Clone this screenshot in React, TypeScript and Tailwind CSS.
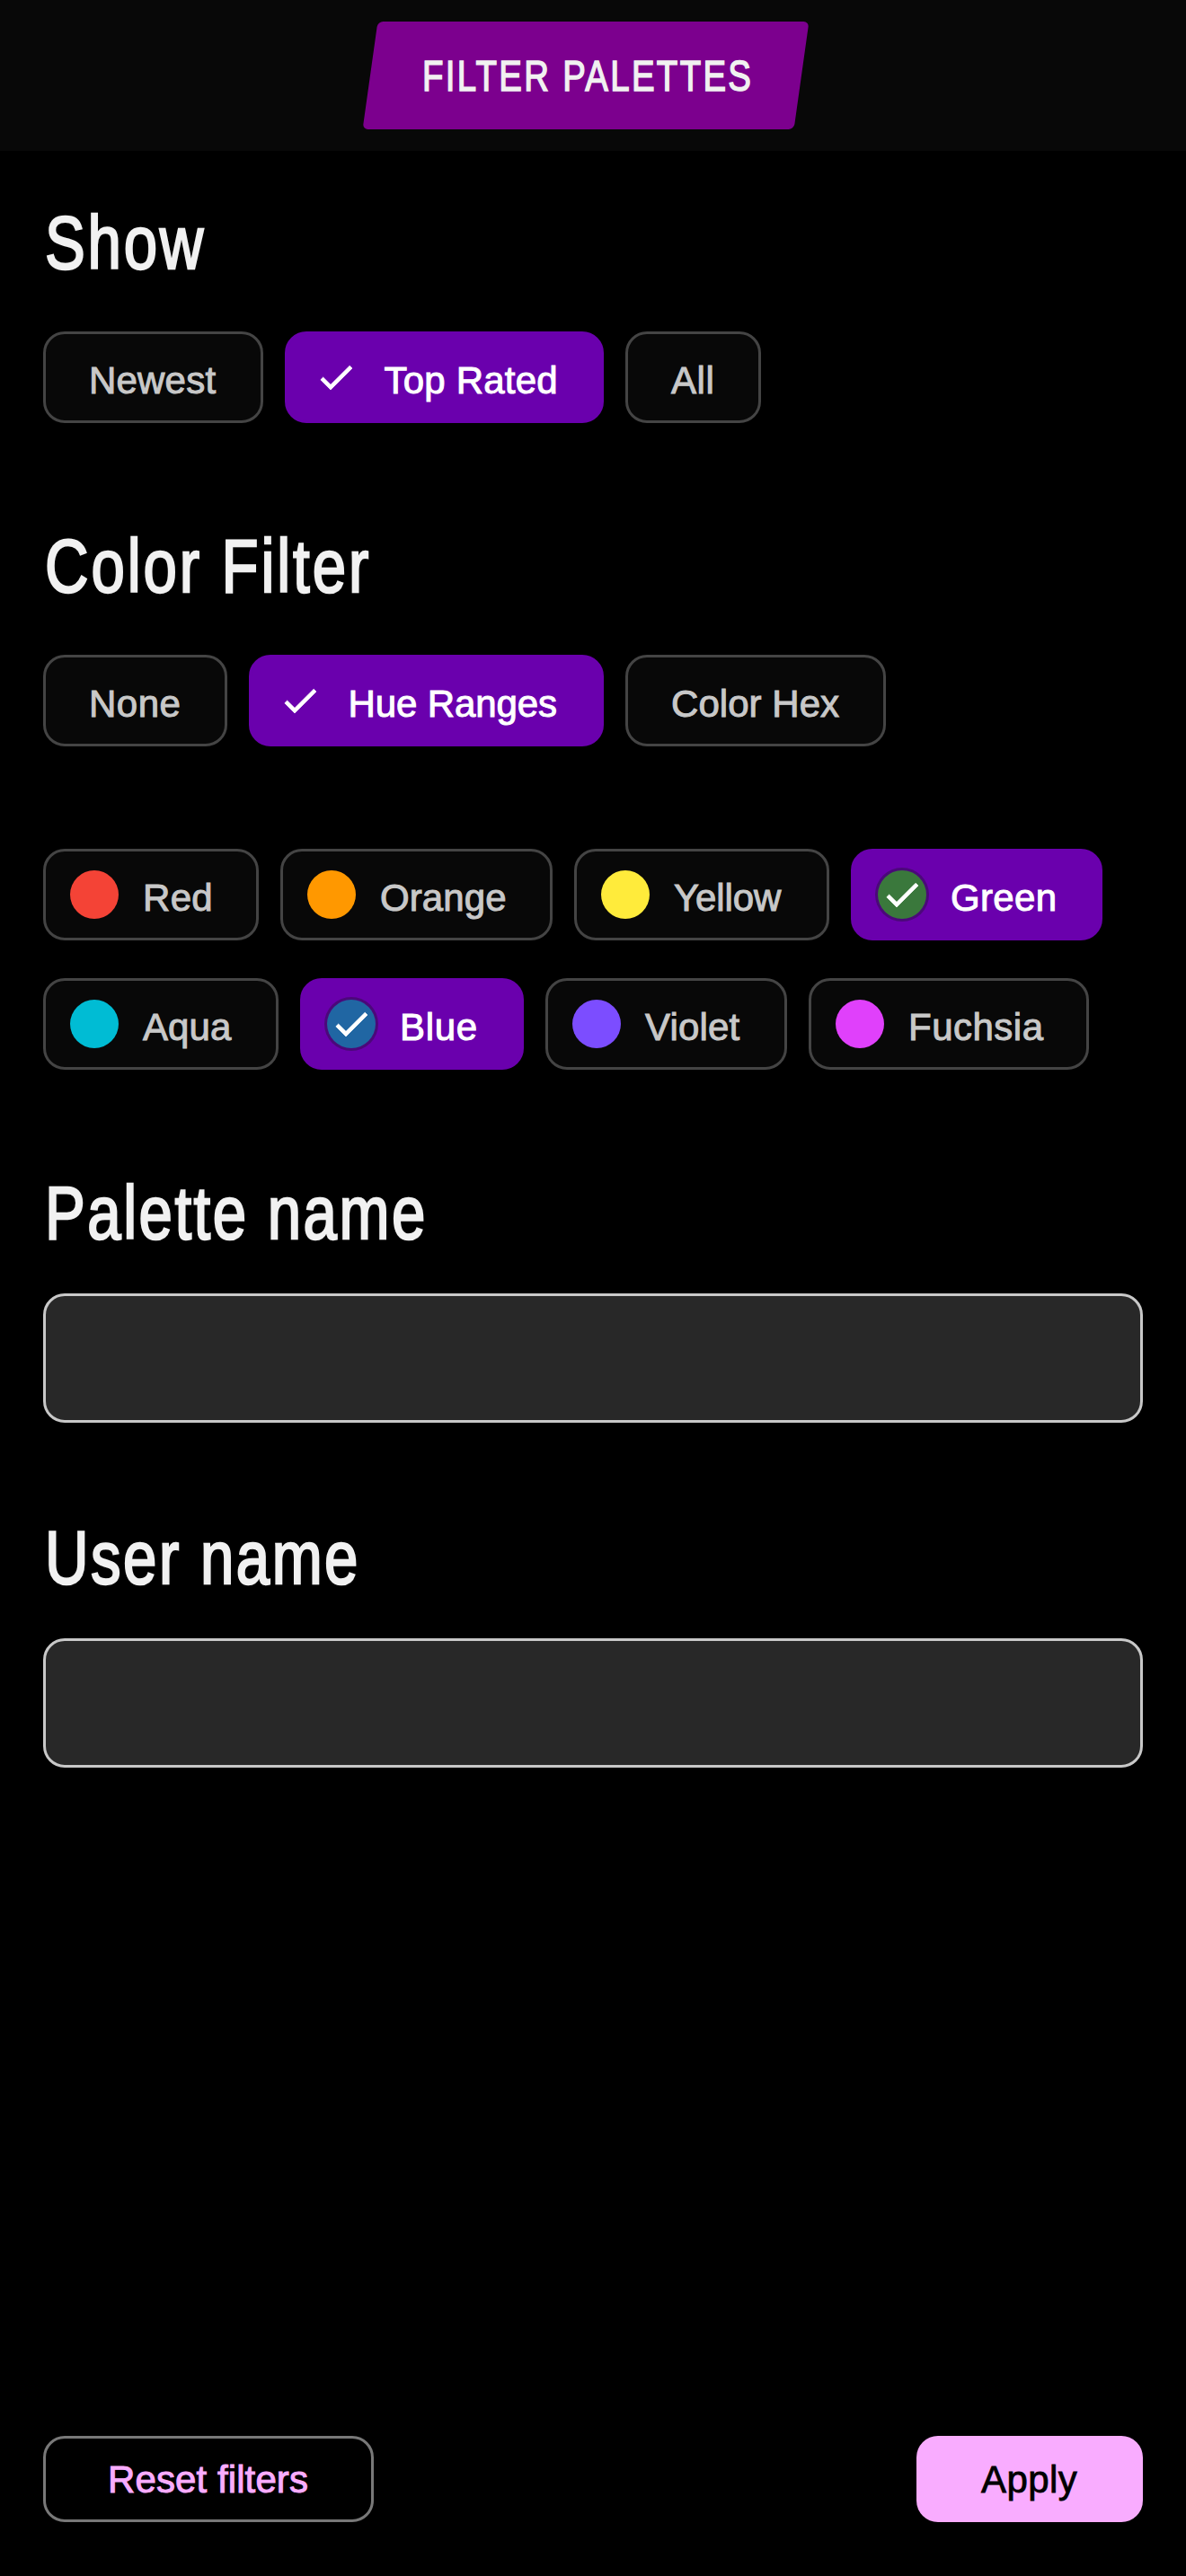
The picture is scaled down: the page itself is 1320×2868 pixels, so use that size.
import React from "react";

type ChipProps = {
  label: string;
  width: string;
  tracking?: string;
  selected?: boolean;
  check?: boolean;
  swatch?: string;
};

function Check({ className = "" }: { className?: string }) {
  return (
    <svg
      viewBox="0 0 24 24"
      className={"size-12 shrink-0 fill-white stroke-white stroke-[0.35] " + className}
      aria-hidden="true"
    >
      <path d="M9 16.17 4.83 12l-1.42 1.41L9 19 21 7l-1.41-1.41z" />
    </svg>
  );
}

function Chip({ label, width, tracking = "", selected, check, swatch }: ChipProps) {
  const pad = swatch ? "pl-[27px]" : check ? "pl-[30px]" : "pl-[48px]";
  const tone = selected
    ? "border-[#6a00ad] bg-[#6a00ad] text-white [-webkit-text-stroke:1px_#fff]"
    : "border-[#444444] bg-[#080808] text-[#c8c8c8] [-webkit-text-stroke:1px_#c8c8c8]";
  return (
    <button
      type="button"
      className={`flex h-[102px] shrink-0 items-center rounded-3xl border-[3px] text-[42px] leading-[48px] whitespace-nowrap ${pad} ${tone} ${width}`}
    >
      {check && <Check className="mr-[29.5px]" />}
      {swatch && (
        <span
          className={`mr-[27px] flex size-[54px] shrink-0 items-center justify-center rounded-full ${swatch} ${
            selected ? "ring-[3px] ring-[#4b087a]" : ""
          }`}
        >
          {selected && <Check />}
        </span>
      )}
      <span className={`mt-[7px] ${tracking}`}>{label}</span>
    </button>
  );
}

function Heading({ children, className = "" }: { children: string; className?: string }) {
  return (
    <h2
      className={`ml-[1.5px] origin-left scale-x-80 text-[84px] leading-[85px] whitespace-nowrap text-[#f1f1f1] [-webkit-text-stroke:2.4px_#f1f1f1] ${className}`}
    >
      {children}
    </h2>
  );
}

const inputClass =
  "block h-36 w-full rounded-3xl border-[3px] border-[#c8c8c8] bg-[#282828] px-9 text-[42px] text-white outline-none";

export default function App() {
  return (
    <div className="flex h-[2868px] w-[1320px] flex-col overflow-hidden bg-black font-['Liberation_Sans',Arial,sans-serif]">
      <header className="flex h-[168px] items-center justify-center bg-[#080808]">
        <div className="mr-[17px] flex h-[120px] w-[480px] -skew-x-[8deg] items-center justify-center rounded-[6px] bg-[#7c008e]">
          <h1 className="mt-[2px] ml-[4px] skew-x-[8deg]">
            <span className="block scale-x-80 text-[48px] leading-[56px] tracking-[2.9px] whitespace-nowrap text-[#f1f1f1] [-webkit-text-stroke:1.5px_#f1f1f1]">
              FILTER PALETTES
            </span>
          </h1>
        </div>
      </header>

      <main className="flex flex-1 flex-col px-12 pt-[60px]">
        <section>
          <Heading className="tracking-[3.4px]">Show</Heading>
          <div className="mt-14 flex gap-6">
            <Chip label="Newest" width="w-[245px]" tracking="tracking-[0.2px]" />
            <Chip label="Top Rated" width="w-[355px]" tracking="tracking-[0.2px]" selected check />
            <Chip label="All" width="w-[151px]" tracking="tracking-[0.6px]" />
          </div>
        </section>

        <section className="mt-[117px]">
          <Heading className="tracking-[3.6px]">Color Filter</Heading>
          <div className="mt-14 flex gap-6">
            <Chip label="None" width="w-[205px]" tracking="tracking-[0.5px]" />
            <Chip label="Hue Ranges" width="w-[395px]" tracking="tracking-[-0.1px]" selected check />
            <Chip label="Color Hex" width="w-[290px]" tracking="tracking-[0.05px]" />
          </div>
          <div className="mt-[114px] flex gap-6">
            <Chip label="Red" width="w-[240px]" tracking="tracking-[0.3px]" swatch="bg-[#f44336]" />
            <Chip label="Orange" width="w-[303px]" tracking="tracking-[0.1px]" swatch="bg-[#ff9800]" />
            <Chip label="Yellow" width="w-[284px]" tracking="tracking-[-0.1px]" swatch="bg-[#ffeb3b]" />
            <Chip label="Green" width="w-[280px]" tracking="tracking-[0.35px]" swatch="bg-[#3a783c]" selected />
          </div>
          <div className="mt-[42px] flex gap-6">
            <Chip label="Aqua" width="w-[262px]" tracking="tracking-[0.07px]" swatch="bg-[#00bcd4]" />
            <Chip label="Blue" width="w-[249px]" tracking="tracking-[0.7px]" swatch="bg-[#2066a3]" selected />
            <Chip label="Violet" width="w-[269px]" tracking="tracking-[0.16px]" swatch="bg-[#7c4dff]" />
            <Chip label="Fuchsia" width="w-[312px]" tracking="tracking-[0.5px]" swatch="bg-[#e040fb]" />
          </div>
        </section>

        <section className="mt-[117px]">
          <Heading className="tracking-[3.1px]">Palette name</Heading>
          <input type="text" aria-label="Palette name" className={`mt-[47px] ${inputClass}`} />
        </section>

        <section className="mt-[108px]">
          <Heading className="tracking-[3.1px]">User name</Heading>
          <input type="text" aria-label="User name" className={`mt-[47px] ${inputClass}`} />
        </section>
      </main>

      <footer className="flex items-center justify-between px-12 pb-[60px] text-[42px] leading-[48px]">
        <button
          type="button"
          className="flex h-24 w-[368px] items-center rounded-3xl border-[3px] border-[#787878] pl-[69px] tracking-[0.1px] whitespace-nowrap text-[#f9acff] [-webkit-text-stroke:1px_#f9acff]"
        >
          <span className="mt-px">Reset filters</span>
        </button>
        <button
          type="button"
          className="flex h-24 w-[252px] items-center rounded-3xl bg-[#f9acff] pl-[72px] tracking-[0.45px] text-black [-webkit-text-stroke:0.8px_#000]"
        >
          <span className="mt-px">Apply</span>
        </button>
      </footer>
    </div>
  );
}
